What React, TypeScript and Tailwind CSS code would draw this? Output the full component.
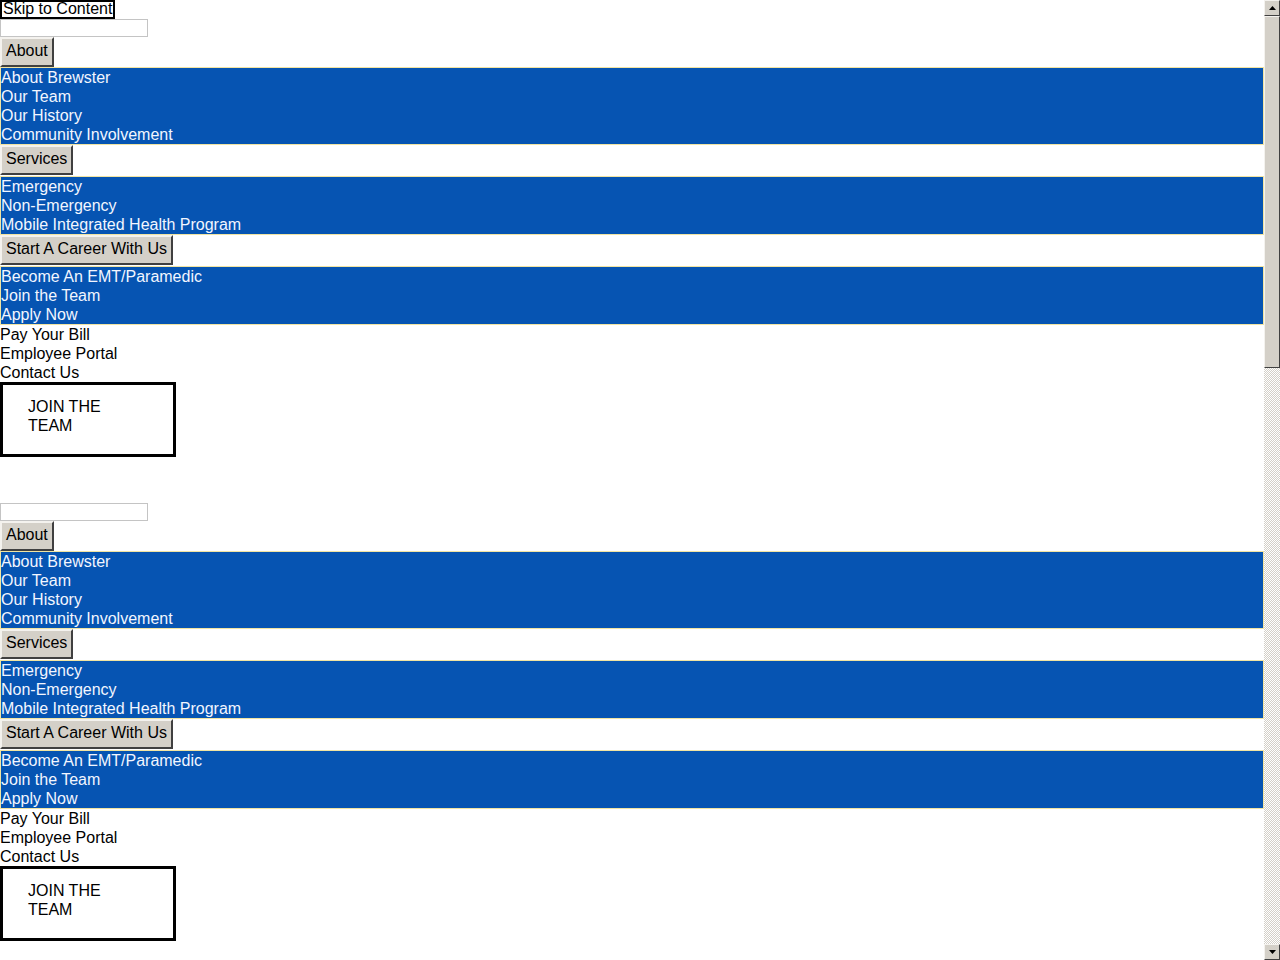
const ABOUT_LINKS = ["About Brewster", "Our Team", "Our History", "Community Involvement"];
const SERVICE_LINKS = ["Emergency", "Non-Emergency", "Mobile Integrated Health Program"];
const CAREER_LINKS = ["Become An EMT/Paramedic", "Join the Team", "Apply Now"];
const PLAIN_LINKS = ["Pay Your Bill", "Employee Portal", "Contact Us"];

function MenuButton({ label }: { label: string }) {
  return (
    <button
      type="button"
      className="box-border block h-[30px] border-2 border-t-[#f4f2ee] border-l-[#f4f2ee] border-r-[#404040] border-b-[#404040] bg-[#d4d0c8] px-1 pt-0 pb-[3px] text-left leading-[19px] text-black"
    >
      {label}
    </button>
  );
}

function SubMenu({ links }: { links: string[] }) {
  return (
    <ul className="w-full border border-[#f1e4a2] bg-[#0654b2]">
      {links.map((link) => (
        <li key={link} className="leading-[19px] text-[#f2f6ff]">
          {link}
        </li>
      ))}
    </ul>
  );
}

function NavBlock() {
  return (
    <nav>
      <input
        type="text"
        aria-label="Search"
        className="box-border block h-[18px] w-[148px] border border-[#c4c4c4] bg-white"
      />
      <MenuButton label="About" />
      <SubMenu links={ABOUT_LINKS} />
      <div className="pb-px">
        <MenuButton label="Services" />
      </div>
      <SubMenu links={SERVICE_LINKS} />
      <div className="pb-px">
        <MenuButton label="Start A Career With Us" />
      </div>
      <SubMenu links={CAREER_LINKS} />
      <ul>
        {PLAIN_LINKS.map((link) => (
          <li key={link} className="leading-[19px] text-black">
            {link}
          </li>
        ))}
      </ul>
      <a
        href="#"
        className="block w-[176px] border-[3px] border-black px-[25px] pt-[12px] pb-[19px] leading-[19px] text-black"
      >
        JOIN THE TEAM
      </a>
    </nav>
  );
}

function Arrow({ up }: { up: boolean }) {
  return (
    <div className="box-border flex h-[16px] w-[16px] items-center justify-center border border-t-[#f4f2ee] border-l-[#f4f2ee] border-r-[#404040] border-b-[#404040] bg-[#d4d0c8]">
      <svg width="7" height="4" viewBox="0 0 7 4">
        {up ? (
          <path d="M3.5 0 L7 4 L0 4 Z" fill="#000" />
        ) : (
          <path d="M0 0 L7 0 L3.5 4 Z" fill="#000" />
        )}
      </svg>
    </div>
  );
}

function Scrollbar() {
  return (
    <div className="flex h-[960px] w-[16px] shrink-0 flex-col">
      <Arrow up />
      <div className="box-border h-[352px] border border-t-[#f4f2ee] border-l-[#f4f2ee] border-r-[#404040] border-b-[#404040] bg-[#d4d0c8]" />
      <div className="flex-1 bg-[repeating-conic-gradient(#d4d0c8_0_25%,#ffffff_0_50%)] bg-[length:2px_2px]" />
      <Arrow up={false} />
    </div>
  );
}

export default function App() {
  return (
    <div className="flex h-[960px] overflow-hidden bg-white font-['Liberation_Sans',Arial,sans-serif] text-[16px] text-black">
      <div className="min-w-0 flex-1 overflow-hidden">
        <a
          href="#content"
          className="box-border block h-[19px] w-fit border-2 border-black bg-white px-px leading-[14px] text-black"
        >
          Skip to Content
        </a>
        <NavBlock />
        <div className="mt-[46px]">
          <NavBlock />
        </div>
      </div>
      <Scrollbar />
    </div>
  );
}
